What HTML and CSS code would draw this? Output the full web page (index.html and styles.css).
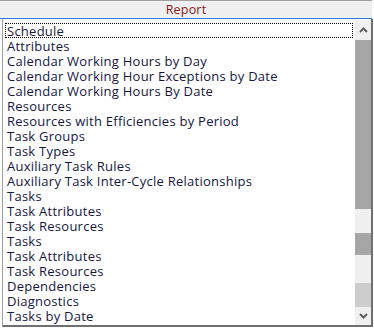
FILE: index.html
```html
<!DOCTYPE html>
<html>
<head>
<meta charset="utf-8">
<link rel="stylesheet" href="styles.css">
</head>
<body>
<div class="frame">
  <div class="header">Report</div>
  <div class="listbox">
    <ul class="items">
      <li class="item focused">Schedule</li>
      <li class="item">Attributes</li>
      <li class="item">Calendar Working Hours by Day</li>
      <li class="item">Calendar Working Hour Exceptions by Date</li>
      <li class="item">Calendar Working Hours By Date</li>
      <li class="item">Resources</li>
      <li class="item">Resources with Efficiencies by Period</li>
      <li class="item">Task Groups</li>
      <li class="item">Task Types</li>
      <li class="item">Auxiliary Task Rules</li>
      <li class="item">Auxiliary Task Inter-Cycle Relationships</li>
      <li class="item">Tasks</li>
      <li class="item">Task Attributes</li>
      <li class="item">Task Resources</li>
      <li class="item">Tasks</li>
      <li class="item">Task Attributes</li>
      <li class="item">Task Resources</li>
      <li class="item">Dependencies</li>
      <li class="item">Diagnostics</li>
      <li class="item">Tasks by Date</li>
    </ul>
    <div class="scrollbar">
      <div class="btn">
        <svg width="9" height="6" viewBox="0 0 9 6"><path d="M1 5 L4.5 1.5 L8 5" fill="none" stroke="#606060" stroke-width="2"/></svg>
      </div>
      <div class="seg thumb h169"></div>
      <div class="seg track h24"></div>
      <div class="seg thumb h22"></div>
      <div class="seg track h28"></div>
      <div class="seg light h24"></div>
      <div class="btn btn-down">
        <svg width="9" height="6" viewBox="0 0 9 6"><path d="M1 1 L4.5 4.5 L8 1" fill="none" stroke="#606060" stroke-width="2"/></svg>
      </div>
    </div>
  </div>
</div>
</body>
</html>
```
FILE: styles.css
```css
html, body {
  margin: 0;
  padding: 0;
  background: #ffffff;
}
.frame {
  width: 373px;
  font-family: "Open Sans", "Noto Sans", sans-serif;
  font-size: 13px;
}
.header {
  height: 17px;
  width: 372px;
  border-top: 1px solid #a0a0a0;
  border-bottom: 1px solid #2b7ad0;
  background: #f0f0f0;
  color: #8b1616;
  text-align: center;
  line-height: 18px;
  font-size: 12.5px;
  letter-spacing: 0.2px;
  box-sizing: content-box;
}
.listbox {
  margin-left: 2px;
  width: 368px;
  height: 306px;
  border-left: 1px solid #a0a0a0;
  border-right: 2px solid #707070;
  border-bottom: 2px solid #707070;
  display: flex;
  overflow: hidden;
  background: #fff;
}
.items {
  list-style: none;
  margin: 0;
  padding: 4px 0 0 2px;
  width: 348px;
  flex: none;
}
.item {
  height: 15px;
  line-height: 15px;
  padding: 1px 0 0 2px;
  color: #16163f;
  white-space: nowrap;
  letter-spacing: 0.25px;
  box-sizing: border-box;
}
.focused {
  outline: 1px dotted #000;
  outline-offset: -1px;
}
.scrollbar {
  margin-left: 2px;
  margin-top: 1px;
  width: 16px;
  display: flex;
  flex-direction: column;
  flex: none;
}
.btn {
  height: 20px;
  background: #f0f0f0;
  display: flex;
  align-items: center;
  justify-content: center;
  flex: none;
}
.btn-down {
  height: 18px;
}
.seg { flex: none; }
.thumb { background: #a6a6a6; }
.track { background: #f0f0f0; }
.light { background: #cdcdcd; }
.h169 { height: 169px; }
.h24 { height: 24px; }
.h22 { height: 22px; }
.h28 { height: 28px; }
```
